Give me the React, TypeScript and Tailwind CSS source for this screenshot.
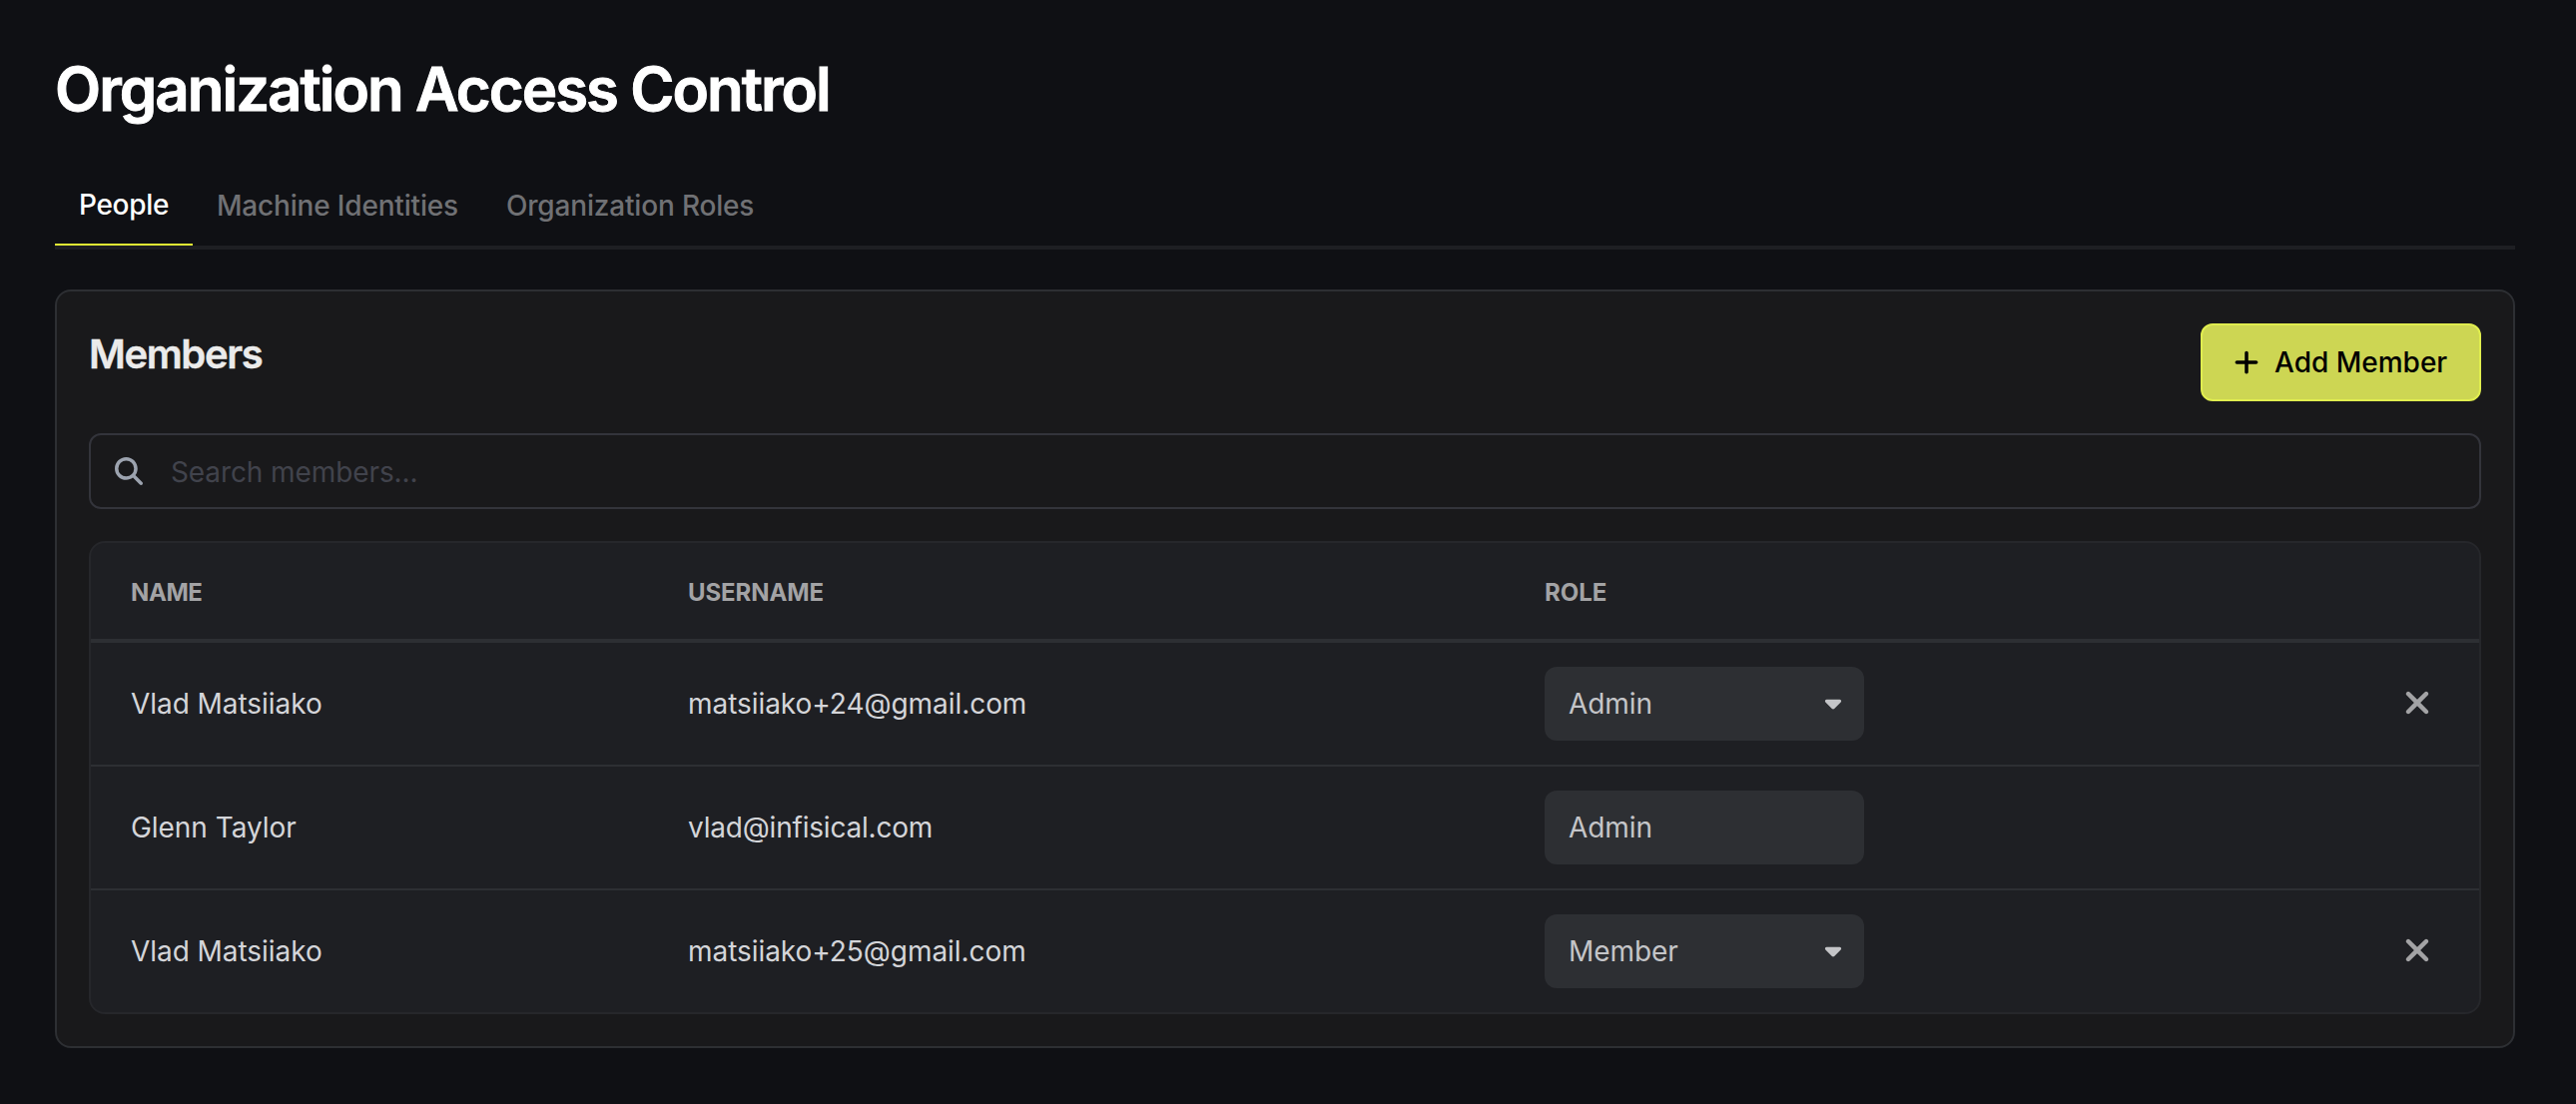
import { FaMagnifyingGlass, FaPlus, FaXmark, FaCaretDown } from "react-icons/fa6";

type Member = { name: string; username: string; role: string; editable: boolean };

const members: Member[] = [
  { name: "Vlad Matsiiako", username: "matsiiako+24@gmail.com", role: "Admin", editable: true },
  { name: "Glenn Taylor", username: "vlad@infisical.com", role: "Admin", editable: false },
  { name: "Vlad Matsiiako", username: "matsiiako+25@gmail.com", role: "Member", editable: true },
];

const columns = "grid grid-cols-[558px_858px_1fr_124px] items-center";

function Tabs() {
  return (
    <nav className="mt-[39px] flex h-[86px] border-b-4 border-[#1e1f23] text-[28px] leading-10 font-medium tracking-[-0.18px] text-[#707174]">
      <button className="h-[82px] w-[138px] border-b-2 border-[#e0ed34] pt-px tracking-[-0.3px] text-white">People</button>
      <button className="h-[82px] px-6 pt-px">Machine Identities</button>
      <button className="h-[82px] px-6 pt-px">Organization Roles</button>
    </nav>
  );
}

function RoleSelect({ role, editable }: { role: string; editable: boolean }) {
  return (
    <div className="flex h-[74px] w-80 items-center justify-between rounded-xl bg-[#2d2f33] pr-[18px] pl-6 text-[#c4c5c8]">
      <span>{role}</span>
      {editable && <FaCaretDown className="mb-0.5 size-[26px]" />}
    </div>
  );
}

function MembersTable() {
  return (
    <div className="mt-8 overflow-hidden rounded-2xl border-2 border-[#26272b] bg-[#1e1f23]">
      <div className={`${columns} h-[100px] border-b-4 border-[#2d2f33] pt-1 pl-10 text-2xl font-bold text-[#a3a3a5]`}>
        <div className="tracking-[-0.4px]">NAME</div>
        <div className="tracking-[-0.1px]">USERNAME</div>
        <div>ROLE</div>
      </div>
      {members.map((m) => (
        <div
          key={m.username}
          className={`${columns} h-[124px] border-b-2 border-[#2d2f33] pl-10 tracking-[-0.05px] text-[#d4d5d9] last:h-[122px] last:border-b-0`}
        >
          <div>{m.name}</div>
          <div className={m.editable ? "" : "tracking-[-0.2px]"}>{m.username}</div>
          <RoleSelect role={m.role} editable={m.editable} />
          {m.editable && (
            <button className="mb-0.5 justify-self-center text-[#a3a3a5]">
              <FaXmark className="size-9" />
            </button>
          )}
        </div>
      ))}
    </div>
  );
}

export default function App() {
  return (
    <main className="h-[1106px] w-[2580px] bg-[#0f1014] pt-[53px] pr-[61px] pl-[55px] font-['Inter',sans-serif] text-[28px] leading-10">
      <h1 className="text-[60px] leading-[72px] font-semibold tracking-[-0.033em] text-white [-webkit-text-stroke:0.9px_white]">
        Organization Access Control
      </h1>
      <Tabs />
      <section className="mt-10 h-[760px] rounded-2xl border-2 border-[#2d2f33] bg-[#19191b] p-8">
        <div className="flex justify-between">
          <h2 className="mt-[3px] text-[40px] leading-[56px] font-semibold tracking-[-0.035em] text-[#ebebeb] [-webkit-text-stroke:0.4px_#ebebeb]">
            Members
          </h2>
          <button className="flex h-[78px] w-[281px] items-center rounded-xl border-2 border-[#e0ed4f] bg-[#cdd653] pl-[30px] font-medium text-black">
            <FaPlus className="mr-3.5 size-7" />
            Add Member
          </button>
        </div>
        <div className="mt-8 flex h-[76px] items-center rounded-xl border-2 border-[#33343b] pl-6">
          <FaMagnifyingGlass className="mr-7 size-7 text-[#9ca3af]" />
          <span className="pt-0.5 tracking-[-0.1px] text-[#41434c]">Search members...</span>
        </div>
        <MembersTable />
      </section>
    </main>
  );
}
